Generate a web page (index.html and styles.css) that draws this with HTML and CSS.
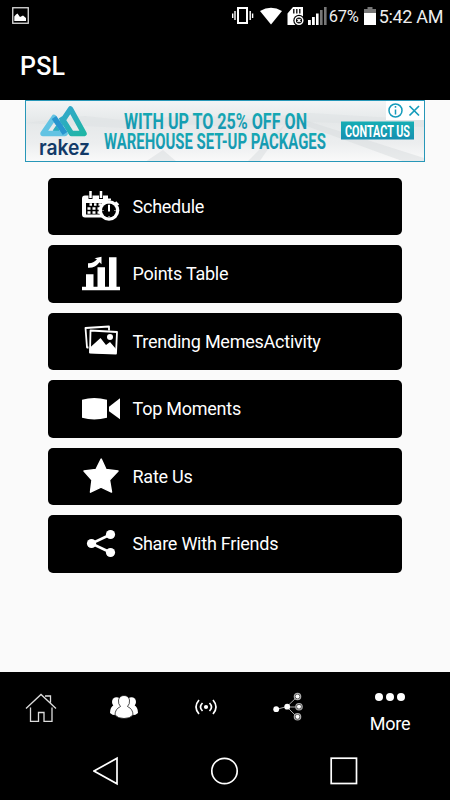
FILE: index.html
```
<!DOCTYPE html>
<html>
<head>
    <meta charset="UTF-8">
    <title>PSL</title>
    <link rel="stylesheet" href="styles.css">
</head>
<body>
  <header class="header">
    <div class="status">
      <svg class="shot" width="17" height="17" viewBox="0 0 17 17">
        <rect x="0.75" y="0.75" width="15.5" height="15.5" fill="none" stroke="#ddd" stroke-width="1.3"/>
        <path d="M2.3 14V9.5L4 7.5 5.5 6.5 8 10 11 8.5 14 11V14z" fill="#fff"/>
      </svg>
      <svg class="signals" width="97" height="20" viewBox="0 0 97 20" fill="#fff">
        <rect x="6" y="2" width="9" height="15" fill="none" stroke="#fff" stroke-width="2"/>
        <path d="M3 5v9M.7 7.5v4.500M18.200 5v9M20.600 7.500v4.500" stroke="#fff" stroke-width="1.400"/>
        <path d="M28 5Q39-1.500 50 5L39 18.500z"/>
        <path d="M55.500 19V7.500L61 1h10v12h-5v6z"/>
        <path d="M61.800 3v4.500M64.800 3v4.500M67.800 3v4.500" stroke="#000" stroke-width="1.300"/>
        <circle cx="67" cy="14.500" r="5.700" fill="#000"/>
        <circle cx="67" cy="14.500" r="3.800" fill="none" stroke="#fff" stroke-width="1.500"/>
        <path d="M65.500 13l3 3m0-3l-3 3" stroke="#fff" stroke-width="1.300"/>
        <path d="M76 14h2.800v5H76zM80 11h2.800v8H80zM84 7.500h2.600v11.500H84z"/>
        <path d="M88 4h2.600v15H88zM92 1h2.600v18H92z" fill="#777"/>
      </svg>
      <span class="percent">67%</span>
      <svg class="battery" width="12" height="18" viewBox="0 0 12 18">
        <path d="M0 2h3.500V0h5v2H12v4H0z" fill="#777"/>
        <path d="M0 6h12v12H0z" fill="#fff"/>
      </svg>
      <span class="clock">5:42 AM</span>
    </div>
    <h1 class="title">PSL</h1>
  </header>

  <main class="content">
    <div class="banner">
      <svg width="400" height="62" viewBox="0 0 400 62">
        <defs>
          <linearGradient id="haze" x1="0" y1="0" x2="0" y2="1">
            <stop offset="0" stop-color="#f3f5f6"/>
            <stop offset="0.35" stop-color="#e5e8e9"/>
            <stop offset="0.7" stop-color="#eceeef"/>
            <stop offset="1" stop-color="#fafafa"/>
          </linearGradient>
          <linearGradient id="teal" x1="0" y1="0" x2="0" y2="1">
            <stop offset="0" stop-color="#16aeb4"/>
            <stop offset="1" stop-color="#168fb0"/>
          </linearGradient>
          <linearGradient id="peak" x1="0" y1="0" x2="1" y2="1">
            <stop offset="0" stop-color="#35a5d2"/>
            <stop offset="1" stop-color="#1fb6a6"/>
          </linearGradient>
        </defs>
        <rect width="400" height="62" fill="url(#haze)"/>
        <path d="M0 23l60-7 45 5 60-6 60 4 60-6 115 7v7l-110-5-70 6-60-4-40 5-60-3z" fill="#dde1e3" opacity=".5"/>
        <path d="M265 20h14l120 38v4h-19zM262 22l-28 40h-12zM120 62l18-12 14 12z" fill="#d7dcdd" opacity=".5"/>
        <g fill="none" stroke-width="5.500" stroke-linejoin="round">
          <path d="M30 32L45.500 9 59 33.500H46.500L36 17" stroke="url(#peak)"/>
          <path d="M40 33.500H18L29 17.500z" stroke="#62c3e3"/>
          <path d="M29 17.500L40 33.500" stroke="#2895cf"/>
        </g>
        <text class="brand" x="14" y="55" textLength="51" lengthAdjust="spacingAndGlyphs">rakez</text>
        <g class="slogan" fill="url(#teal)">
          <text transform="translate(99 28.500) scale(.75 1)" textLength="244" lengthAdjust="spacingAndGlyphs">WITH UP TO 25% OFF ON</text>
          <text transform="translate(79 48.500) scale(.7 1)" textLength="317" lengthAdjust="spacingAndGlyphs">WAREHOUSE SET-UP PACKAGES</text>
        </g>
        <rect x="316" y="21.500" width="73" height="18" fill="url(#teal)"/>
        <text class="contact" transform="translate(320 36.500) scale(.65 1)" textLength="100" lengthAdjust="spacingAndGlyphs">CONTACT US</text>
        <path d="M361 1h38v19h-38z" fill="#fff"/>
        <g fill="none" stroke="#159cbb" stroke-width="1.500">
          <circle cx="370.500" cy="10.500" r="6.500"/>
          <path d="M370.500 9.500v5M370.500 6v1.700"/>
          <path d="M384.500 6l9.500 9.500m0-9.500l-9.500 9.500" stroke-width="1.700"/>
        </g>
        <rect x="0.500" y="0.500" width="399" height="61" fill="none" stroke="#2797b8"/>
      </svg>
    </div>

    <nav class="menu">
      <a class="item">
        <svg class="icon" width="40" height="40" viewBox="0 0 40 40">
          <path d="M3 9.500h25v5h2v17H5q-3 0-3-3v-16q0-3 3-3z" fill="#fff"/>
          <path d="M10.500 5v8M21 5v8" stroke="#000" stroke-width="4"/>
          <path d="M10.500 5v7M21 5v7" stroke="#fff" stroke-width="2.500"/>
          <path d="M6 17h16v11.500H6z" fill="#000"/>
          <path d="M9.500 18.500h2.500m2 0h2.500m2 0h2.500M7.500 22.500h3m2 0h3m2 0h3M7.500 26.500h3m2 0h3m2 0h3" stroke="#fff" stroke-width="2.400"/>
          <circle cx="29" cy="24.500" r="10.300" fill="#fff"/>
          <circle cx="29" cy="24.500" r="7" fill="#000"/>
          <path d="M27 13.500h4m4.500 2.500l3 3M29 19v6.500" stroke="#fff" stroke-width="2"/>
          <path d="M29 17.500v1M29 30v1.500M22.500 24.500h1M34.500 24.500h1" stroke="#fff"/>
        </svg>
        <span>Schedule</span>
      </a>
      <a class="item">
        <svg class="icon" width="40" height="40" viewBox="0 1.200 40 40" fill="#fff">
          <path d="M2 34h38v3.500H2zM6 21.500h7.500V35H6zM17.500 14.500H25V35h-7.500zM29 4.500h7.500V35H29z"/>
          <path d="M8 10.500q5 .5 9-4L14.500 5.500l7-1.500v7.500l-2-2Q15 15.500 8 15z"/>
        </svg>
        <span>Points Table</span>
      </a>
      <a class="item">
        <svg class="icon" width="40" height="40" viewBox="0 0 40 40">
          <path d="M8.500 26.500H7L5.500 7 29 5.500v4" fill="none" stroke="#fff" stroke-width="1.800" stroke-linejoin="round"/>
          <path d="M10.500 9.500L37 11l-1 21.500-26-1z" fill="#000" stroke="#fff" stroke-width="1.800" stroke-linejoin="round"/>
          <path d="M9.500 32v-5L20.500 17l5.500 7 4-3 6 7v5z" fill="#fff"/>
          <circle cx="30" cy="16" r="3" fill="#fff"/>
        </svg>
        <span>Trending MemesActivity</span>
      </a>
      <a class="item">
        <svg class="icon" width="40" height="40" viewBox="0 1.200 40 40" fill="#fff">
          <path d="M2 12Q14 8.500 27 12V30Q14 33.500 2 30z"/>
          <path d="M40 10.500v21l-11-8v-4.500z"/>
        </svg>
        <span>Top Moments</span>
      </a>
      <a class="item">
        <svg class="icon" width="40" height="40" viewBox="0 1.400 40 40" fill="#fff">
          <path d="M21.200 4.500L26 15l12 1.500-8.500 9L31.500 37.500 21 32.500 10.500 37.500 12 25.500 4 16.500 16 15z" stroke="#fff" stroke-width="1.500" stroke-linejoin="round"/>
        </svg>
        <span>Rate Us</span>
      </a>
      <a class="item">
        <svg class="icon" width="40" height="40" viewBox="0 1.500 40 40" fill="#fff">
          <path d="M30.500 12L11.500 21l19 9" fill="none" stroke="#fff" stroke-width="2.500"/>
          <circle cx="30.500" cy="12" r="4.600"/>
          <circle cx="11.500" cy="21" r="4.600"/>
          <circle cx="30.500" cy="30" r="4.600"/>
        </svg>
        <span>Share With Friends</span>
      </a>
    </nav>
  </main>

  <footer class="footer">
    <div class="tabs">
      <svg class="tab" width="32" height="30" viewBox="0 0 32 30" fill="none" stroke="#ddd" stroke-width="1.300">
        <path d="M1 16.500L16 2.500l15 14M20 4h5.500v6.500M5.500 15.500v14h8v-9h5.500v9h8v-14"/>
      </svg>
      <svg class="tab" width="30" height="30" viewBox="0 0 30 30" fill="#fff">
        <ellipse cx="7.500" cy="10" rx="4.500" ry="4.800"/>
        <ellipse cx="22.500" cy="10" rx="4.500" ry="4.800"/>
        <path d="M1 21q0-6 4-8h20q4 2 4 8-3 3-8 2H9q-5 1-8-2z"/>
        <path d="M6 23q0-6 5.500-8.500-2.500-2.500-2-6.500 1-4.500 5.500-4.500t5.500 4.500q.5 4-2 6.500Q24 17 24 23q-3 3.500-9 3.500t-9-3.500z" stroke="#000" stroke-width="0.700"/>
      </svg>
      <svg class="tab" width="24" height="30" viewBox="0 0 24 30" fill="none" stroke="#fff" stroke-width="1.700">
        <circle cx="12" cy="15" r="2.100" fill="#fff" stroke="none"/>
        <path d="M8.500 11q-4 4 0 8M15.500 11q4 4 0 8M5 8q-6 7 0 14M19 8q6 7 0 14"/>
      </svg>
      <svg class="tab" width="30" height="30" viewBox="0 0 30 30">
        <path d="M3 17.500l11-3L24.500 4.500M14 15h12M14 15l10.500 10.500" fill="none" stroke="#aaa"/>
        <g fill="#fff">
          <circle cx="3.200" cy="17.200" r="2.900"/>
          <circle cx="14.200" cy="14.700" r="2.900"/>
        </g>
        <g fill="#fff" stroke="#444" stroke-width="1">
          <circle cx="24.500" cy="4.500" r="2.500"/><circle cx="26" cy="14.700" r="2.500"/><circle cx="24.500" cy="24.800" r="2.500"/>
        </g>
        <g fill="none" stroke="#aaa" stroke-width="1.200">
          <circle cx="24.500" cy="4.500" r="3.200"/><circle cx="26" cy="14.700" r="3.200"/><circle cx="24.500" cy="24.800" r="3.200"/>
        </g>
      </svg>
      <div class="more">
        <svg width="32" height="10" viewBox="0 0 32 10" fill="#fff">
          <circle cx="5" cy="5" r="4"/><circle cx="16" cy="5" r="4"/><circle cx="27" cy="5" r="4"/>
        </svg>
        <span>More</span>
      </div>
    </div>
    <div class="keys">
      <svg width="28" height="30" viewBox="0 0 28 30" fill="none" stroke="#fff" stroke-width="1.700">
        <path d="M1 15L24 2.300v25.400z"/>
      </svg>
      <svg width="30" height="30" viewBox="0 0 30 30" fill="none" stroke="#fff" stroke-width="1.700">
        <circle cx="14.500" cy="15" r="12.700"/>
      </svg>
      <svg width="30" height="30" viewBox="0 0 30 30" fill="none" stroke="#fff" stroke-width="1.700">
        <rect x="2.200" y="2.200" width="25.300" height="25.300"/>
      </svg>
    </div>
  </footer>
</body>
</html>
```

FILE: styles.css
```
body{
    margin: 0;
    height: 800px;
    display: flex;
    flex-direction: column;
    background-color: #fafafa;
    font-family: Roboto, sans-serif;
    color: white;
    overflow: hidden;
}
svg{
    display: block;
    flex: none;
}
.header{
    height: 100px;
    background-color: black;
}
.status{
    display: flex;
    align-items: center;
    height: 32px;
    padding: 0 7px 0 12px;
}
.signals{
    margin-left: auto;
}
.shot{
    margin-top: -2px;
}
.status span{
    color: #eee;
    white-space: nowrap;
}
.percent{
    font-size: 16.5px;
    width: 31px;
    margin-right: 4px;
    letter-spacing: -0.3px;
}
.clock{
    font-size: 18px;
    margin-left: 3px;
    letter-spacing: -0.35px;
}
.title{
    margin: 18px 0 0 20px;
    font-size: 25px;
    line-height: 33px;
    font-weight: 500;
    letter-spacing: 0.2px;
}
.content{
    flex: 1;
    display: flex;
    flex-direction: column;
    align-items: center;
}
.brand{
    font-family: Inter, sans-serif;
    font-size: 21px;
    font-weight: 600;
    fill: #123a68;
}
.slogan{
    font-size: 21.5px;
    font-weight: 700;
}
.contact{
    font-size: 17px;
    font-weight: 700;
    fill: white;
}
.menu{
    display: flex;
    flex-direction: column;
    gap: 10px;
    width: 354.5px;
    margin-top: 15.5px;
}
.item{
    display: flex;
    align-items: center;
    height: 57.5px;
    box-sizing: border-box;
    padding-left: 32.25px;
    border-radius: 5px;
    background-color: black;
    font-size: 18px;
    letter-spacing: -0.24px;
}
.icon{
    margin-right: 12.5px;
}
.footer{
    height: 128px;
    background-color: black;
}
.tabs{
    display: flex;
    height: 71px;
    padding-left: 25px;
}
.tab{
    margin-top: 20px;
}
.tab:nth-child(2){
    margin-left: 52px;
}
.tab:nth-child(3){
    margin-left: 55px;
}
.tab:nth-child(4){
    margin-left: 55px;
}
.more{
    display: flex;
    flex-direction: column;
    align-items: center;
    width: 60px;
    margin-left: 57px;
    padding-top: 20px;
    font-size: 18px;
    line-height: 22px;
    letter-spacing: -0.2px;
}
.more span{
    margin-top: 11px;
}
.keys{
    display: flex;
    justify-content: center;
    gap: 89px;
    padding: 13px 0 0 2px;
}
```
